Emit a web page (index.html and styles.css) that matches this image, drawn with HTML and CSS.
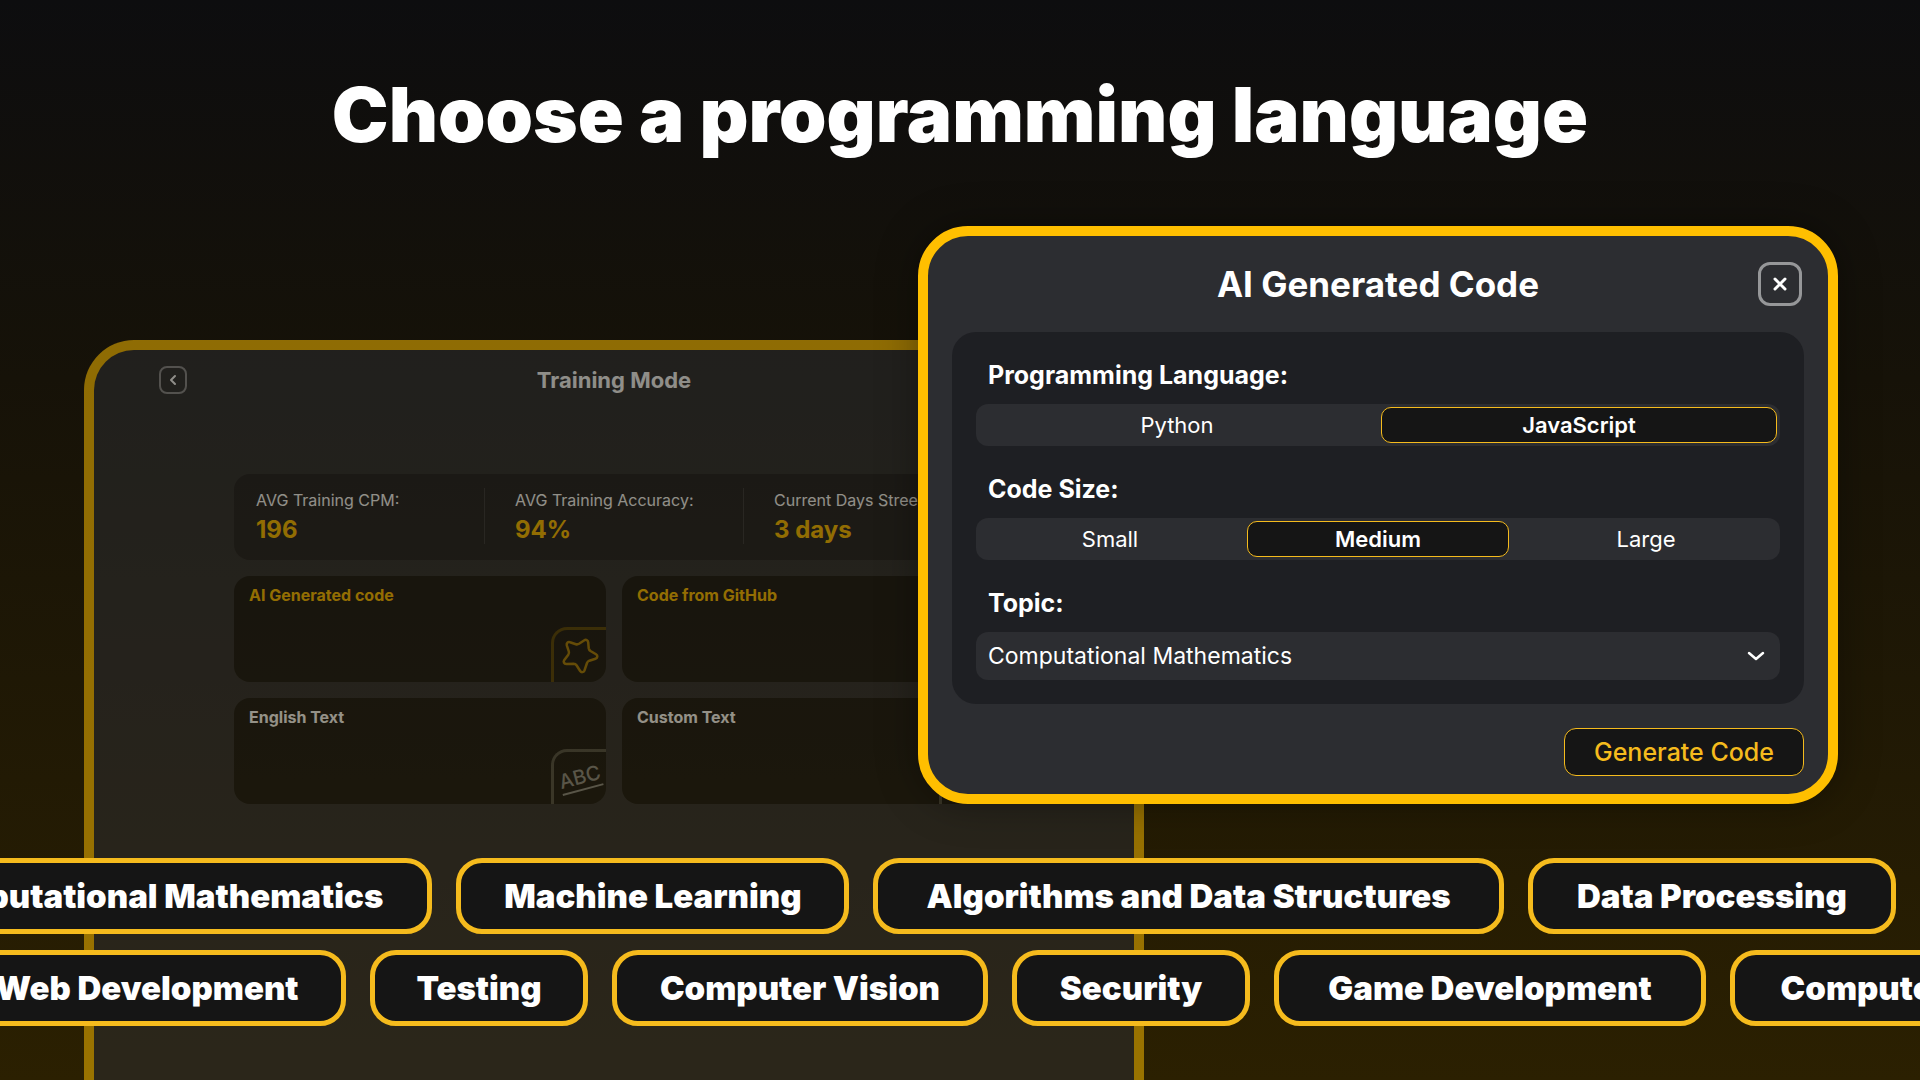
FILE: index.html
```
<!DOCTYPE html>
<html lang="en">
<head>
  <meta charset="UTF-8">
  <meta name="viewport" content="width=device-width, initial-scale=1.0">
  <title>Choose a programming language</title>
  <link rel="stylesheet" href="styles.css">
</head>
<body>

  <main class="stage">
    <h1 class="headline">Choose a programming language</h1>

    <!-- Dimmed window in the back -->
    <section class="window training">
      <header class="training-header">
        <button class="back-button" type="button" aria-label="Back">
          <svg viewBox="0 0 12 12" width="12" height="12"><path d="M8 2 4 6l4 4"/></svg>
        </button>
        <h2>Training Mode</h2>
      </header>

      <div class="training-body">
        <dl class="stats">
          <div class="stat"><dt>AVG Training CPM:</dt><dd>196</dd></div>
          <div class="stat"><dt>AVG Training Accuracy:</dt><dd>94%</dd></div>
          <div class="stat"><dt>Current Days Streek:</dt><dd>3 days</dd></div>
        </dl>

        <div class="cards">
          <article class="card card-gold">
            <h3>AI Generated code</h3>
            <div class="card-icon">
              <svg viewBox="0 0 40 40" width="40" height="40">
                <path d="M24 4.500C26 3.200 28 4 28.200 6.400L28.700 12.200Q29 14 30.500 15L36 18.300C38 19.600 37.700 22 35.500 22.700L29.300 24.700Q27.700 25.300 27 27L24.500 34.400C23.500 36.600 21.300 36.700 20 34.700L16.500 29.300Q15.500 27.700 13.600 27.700L6.300 27.900C4 27.900 3 25.800 4.300 24L8.300 18.700Q9.400 17.200 8.800 15.400L6.800 9.400C6.200 7.100 8 5.400 10 6.200L15.900 8.200Q17.500 8.700 19 7.800Z"/>
              </svg>
            </div>
          </article>
          <article class="card card-gold">
            <h3>Code from GitHub</h3>
            <div class="card-icon"></div>
          </article>
          <article class="card">
            <h3>English Text</h3>
            <div class="card-icon"><span class="abc">ABC</span></div>
          </article>
          <article class="card">
            <h3>Custom Text</h3>
            <div class="card-icon"></div>
          </article>
        </div>
      </div>
    </section>

    <!-- Code generation dialog -->
    <form class="window dialog">
      <header class="dialog-header">
        <h2>AI Generated Code</h2>
        <button class="close-button" type="button" aria-label="Close">
          <svg viewBox="0 0 16 16" width="16" height="16"><path d="M3 3l10 10M13 3 3 13"/></svg>
        </button>
      </header>

      <div class="options">
        <fieldset>
          <legend>Programming Language:</legend>
          <div class="segments">
            <label><input type="radio" name="language" value="python"><span>Python</span></label>
            <label><input type="radio" name="language" value="javascript" checked><span>JavaScript</span></label>
          </div>
        </fieldset>

        <fieldset>
          <legend>Code Size:</legend>
          <div class="segments">
            <label><input type="radio" name="size" value="small"><span>Small</span></label>
            <label><input type="radio" name="size" value="medium" checked><span>Medium</span></label>
            <label><input type="radio" name="size" value="large"><span>Large</span></label>
          </div>
        </fieldset>

        <div class="field">
          <label class="field-label" for="topic">Topic:</label>
          <div class="select">
            <select id="topic">
              <option>Computational Mathematics</option>
              <option>Machine Learning</option>
              <option>Algorithms and Data Structures</option>
              <option>Data Processing</option>
            </select>
            <svg viewBox="0 0 18 10" width="18" height="10"><path d="M2 2l7 6 7-6"/></svg>
          </div>
        </div>
      </div>

      <footer class="dialog-footer">
        <button class="generate-button" type="submit">Generate Code</button>
      </footer>
    </form>

    <!-- Topic strips running off both edges -->
    <div class="topics">
      <ul class="strip strip-top">
        <li>Computational Mathematics</li>
        <li>Machine Learning</li>
        <li>Algorithms and Data Structures</li>
        <li>Data Processing</li>
      </ul>
      <ul class="strip strip-bottom">
        <li>Web Development</li>
        <li>Testing</li>
        <li>Computer Vision</li>
        <li>Security</li>
        <li>Game Development</li>
        <li>Computer Graphics</li>
      </ul>
    </div>
  </main>

</body>
</html>
```
FILE: styles.css
```
:root {
  --gold: #ffbf00;
  --gold-soft: #f5bb1d;
  --panel: #2c2d31;
  --panel-dark: #1e1f23;
  --ink: #151515;
}

* {
  box-sizing: border-box;
}

body {
  margin: 0;
  font-family: Inter, "Open Sans", sans-serif;
  color: #fff;
  background: #0d0d0f;
}

h1, h2, h3, dl, dd, ul, fieldset {
  margin: 0;
  padding: 0;
}

button, select {
  font: inherit;
  color: inherit;
}

svg {
  fill: none;
  stroke: currentColor;
  stroke-linecap: round;
  stroke-linejoin: round;
}

/* The windows overlap, so they share grid cells */
.stage {
  display: grid;
  grid-template-columns: 84fr 834fr 226fr 694fr 82fr;
  grid-template-rows: 226px 114px 518px auto 1fr;
  min-height: 100vh;
  overflow: hidden;
  background: linear-gradient(#0d0d0f, #161208 35%, #2b2001);
}

.headline {
  grid-area: 1 / 1 / 2 / -1;
  padding-top: 64px;
  font-size: 76px;
  line-height: 100px;
  font-weight: 900;
  text-align: center;
  white-space: nowrap;
}

.window {
  border: 10px solid var(--gold);
  border-radius: 50px;
  background: var(--panel);
}

/* Training window */
.training {
  grid-area: 3 / 2 / -1 / 4;
  border-bottom: 0;
  border-radius: 50px 50px 0 0;
  opacity: 0.52;
}

.training-header {
  display: grid;
  grid-template-columns: 28px 1fr 28px;
  align-items: center;
  height: 60px;
  padding: 0 65px;
}

.training-header h2 {
  font-size: 22px;
  text-align: center;
}

.back-button {
  display: grid;
  place-items: center;
  width: 28px;
  height: 28px;
  padding: 0;
  border: 2px solid #8b8c8e;
  border-radius: 8px;
  background: none;
}

.back-button svg {
  stroke-width: 2;
}

.training-body {
  display: grid;
  gap: 16px;
  padding: 64px 140px 0;
}

.stats {
  display: grid;
  grid-template-columns: 250fr 259fr 251fr;
  padding: 14px 0 16px;
  border-radius: 16px;
  background: var(--panel-dark);
}

.stat {
  height: 56px;
  padding-left: 30px;
  border-left: 1px solid #37383c;
  white-space: nowrap;
}

.stat:first-child {
  padding-left: 22px;
  border-left: 0;
}

.stat dt {
  font-size: 16px;
  line-height: 24px;
}

.stat dd {
  color: var(--gold);
  font-size: 24px;
  line-height: 36px;
  font-weight: 700;
}

.cards {
  display: grid;
  grid-template-columns: 1fr 1fr;
  gap: 16px;
}

.card {
  display: flex;
  justify-content: space-between;
  height: 106px;
  padding-left: 15px;
  overflow: hidden;
  border-radius: 16px;
  background: var(--ink);
}

.card h3 {
  padding-top: 7px;
  font-size: 16px;
  line-height: 24px;
  font-weight: 700;
}

.card-gold h3 {
  color: var(--gold);
}

.card-icon {
  display: grid;
  place-items: center;
  align-self: flex-end;
  width: 55px;
  height: 55px;
  border: solid #505048;
  border-width: 3px 0 0 3px;
  border-radius: 16px 0 0 0;
  color: #8c8c86;
}

.card-gold .card-icon {
  border-color: #57430a;
  color: #a67c0a;
}

.card-icon svg {
  stroke-width: 2.5;
}

.abc {
  border-bottom: 2px solid;
  font-size: 20px;
  line-height: 24px;
  font-weight: 500;
  transform: rotate(-15deg);
}

/* Dialog */
.dialog {
  grid-area: 2 / 3 / 4 / 5;
  z-index: 1;
  align-self: start;
  padding: 0 24px 18px;
  box-shadow: 0 0 40px rgba(0, 0, 0, 0.35);
}

.dialog-header {
  display: grid;
  grid-template-columns: 44px 1fr 44px;
  align-items: center;
  height: 96px;
  padding: 0 2px;
}

.dialog-header h2 {
  grid-column: 2;
  font-size: 35px;
  line-height: 48px;
  font-weight: 700;
  text-align: center;
}

.close-button {
  display: grid;
  place-items: center;
  width: 44px;
  height: 44px;
  padding: 0;
  border: 3px solid #969799;
  border-radius: 12px;
  background: none;
}

.close-button svg {
  stroke-width: 3;
}

.options {
  display: grid;
  gap: 24px;
  padding: 24px;
  border-radius: 24px;
  background: var(--panel-dark);
}

fieldset {
  min-width: 0;
  border: 0;
}

legend, .field-label {
  display: block;
  margin-bottom: 10px;
  padding: 0 12px;
  font-size: 25px;
  line-height: 38px;
  font-weight: 700;
}

.segments {
  display: flex;
  gap: 6px;
  height: 42px;
  padding: 3px;
  border-radius: 12px;
  background: var(--panel);
}

.segments label {
  position: relative;
  flex: 1;
  cursor: pointer;
}

.segments input {
  position: absolute;
  inset: 0;
  margin: 0;
  opacity: 0;
}

.segments span {
  display: grid;
  place-items: center;
  height: 36px;
  border-radius: 10px;
  font-size: 22px;
}

.segments input:checked + span {
  border: 1px solid var(--gold-soft);
  background: var(--ink);
  font-weight: 600;
}

.select {
  position: relative;
}

.select select {
  display: block;
  width: 100%;
  height: 48px;
  padding: 0 48px 0 12px;
  border: 0;
  border-radius: 12px;
  appearance: none;
  background: var(--panel);
  font-size: 23px;
}

.select svg {
  position: absolute;
  top: 19px;
  right: 15px;
  stroke-width: 2.5;
  pointer-events: none;
}

.dialog-footer {
  display: flex;
  justify-content: flex-end;
  padding-top: 24px;
}

.generate-button {
  width: 240px;
  height: 48px;
  padding: 0;
  border: 1px solid var(--gold-soft);
  border-radius: 12px;
  background: var(--ink);
  color: var(--gold-soft);
  font-size: 25px;
  font-weight: 500;
}

/* Topic strips */
.topics {
  grid-area: 4 / 1 / 5 / -1;
  z-index: 2;
  display: grid;
  gap: 16px;
  min-width: 0;
}

.strip {
  display: grid;
  gap: 24px;
  list-style: none;
}

.strip-top {
  grid-template-columns: 570fr 393fr 630fr 368fr;
  margin: 0 24px 0 -138px;
}

.strip-bottom {
  grid-template-columns: 398fr 218fr 376fr 238fr 432fr 424fr;
  margin: 0 -234px 0 -52px;
}

.strip li {
  padding: 14px 0;
  border: 5px solid var(--gold-soft);
  border-radius: 26px;
  background: var(--ink);
  font-size: 33px;
  line-height: 38px;
  font-weight: 900;
  text-align: center;
  white-space: nowrap;
}
```
